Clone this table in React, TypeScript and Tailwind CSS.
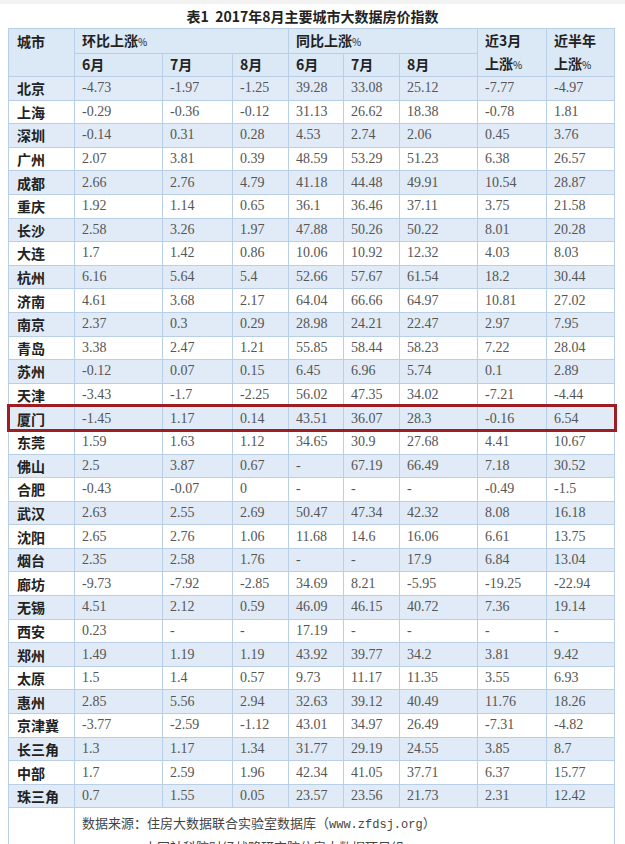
const rows: [string, ...string[]][] = [
  ["北京", "-4.73", "-1.97", "-1.25", "39.28", "33.08", "25.12", "-7.77", "-4.97"],
  ["上海", "-0.29", "-0.36", "-0.12", "31.13", "26.62", "18.38", "-0.78", "1.81"],
  ["深圳", "-0.14", "0.31", "0.28", "4.53", "2.74", "2.06", "0.45", "3.76"],
  ["广州", "2.07", "3.81", "0.39", "48.59", "53.29", "51.23", "6.38", "26.57"],
  ["成都", "2.66", "2.76", "4.79", "41.18", "44.48", "49.91", "10.54", "28.87"],
  ["重庆", "1.92", "1.14", "0.65", "36.1", "36.46", "37.11", "3.75", "21.58"],
  ["长沙", "2.58", "3.26", "1.97", "47.88", "50.26", "50.22", "8.01", "20.28"],
  ["大连", "1.7", "1.42", "0.86", "10.06", "10.92", "12.32", "4.03", "8.03"],
  ["杭州", "6.16", "5.64", "5.4", "52.66", "57.67", "61.54", "18.2", "30.44"],
  ["济南", "4.61", "3.68", "2.17", "64.04", "66.66", "64.97", "10.81", "27.02"],
  ["南京", "2.37", "0.3", "0.29", "28.98", "24.21", "22.47", "2.97", "7.95"],
  ["青岛", "3.38", "2.47", "1.21", "55.85", "58.44", "58.23", "7.22", "28.04"],
  ["苏州", "-0.12", "0.07", "0.15", "6.45", "6.96", "5.74", "0.1", "2.89"],
  ["天津", "-3.43", "-1.7", "-2.25", "56.02", "47.35", "34.02", "-7.21", "-4.44"],
  ["厦门", "-1.45", "1.17", "0.14", "43.51", "36.07", "28.3", "-0.16", "6.54"],
  ["东莞", "1.59", "1.63", "1.12", "34.65", "30.9", "27.68", "4.41", "10.67"],
  ["佛山", "2.5", "3.87", "0.67", "-", "67.19", "66.49", "7.18", "30.52"],
  ["合肥", "-0.43", "-0.07", "0", "-", "-", "-", "-0.49", "-1.5"],
  ["武汉", "2.63", "2.55", "2.69", "50.47", "47.34", "42.32", "8.08", "16.18"],
  ["沈阳", "2.65", "2.76", "1.06", "11.68", "14.6", "16.06", "6.61", "13.75"],
  ["烟台", "2.35", "2.58", "1.76", "-", "-", "17.9", "6.84", "13.04"],
  ["廊坊", "-9.73", "-7.92", "-2.85", "34.69", "8.21", "-5.95", "-19.25", "-22.94"],
  ["无锡", "4.51", "2.12", "0.59", "46.09", "46.15", "40.72", "7.36", "19.14"],
  ["西安", "0.23", "-", "-", "17.19", "-", "-", "-", "-"],
  ["郑州", "1.49", "1.19", "1.19", "43.92", "39.77", "34.2", "3.81", "9.42"],
  ["太原", "1.5", "1.4", "0.57", "9.73", "11.17", "11.35", "3.55", "6.93"],
  ["惠州", "2.85", "5.56", "2.94", "32.63", "39.12", "40.49", "11.76", "18.26"],
  ["京津冀", "-3.77", "-2.59", "-1.12", "43.01", "34.97", "26.49", "-7.31", "-4.82"],
  ["长三角", "1.3", "1.17", "1.34", "31.77", "29.19", "24.55", "3.85", "8.7"],
  ["中部", "1.7", "2.59", "1.96", "42.34", "41.05", "37.71", "6.37", "15.77"],
  ["珠三角", "0.7", "1.55", "0.05", "23.57", "23.56", "21.73", "2.31", "12.42"],
];

const cjk = "font-['Noto_Sans_CJK_SC',sans-serif]";
const serif = "font-['Liberation_Serif','Noto_Sans_CJK_SC',serif]";
const bd = "border border-[#b9cfe7]";

// small percent sign, as in the source image
const Pct = () => <span className="text-[10px] font-normal">%</span>;

export default function App() {
  return (
    <div className="w-[625px] h-[844px] overflow-hidden bg-white">
      <div className="h-[4px] bg-[#f3f3f3]" />
      <div className={`h-[24px] flex items-center justify-center text-[14px] font-bold text-[#222] ${cjk}`}>
        表1&nbsp;&nbsp;2017年8月主要城市大数据房价指数
      </div>
      <table className="ml-[8px] w-[606px] border-collapse table-fixed">
        <colgroup>
          <col className="w-[66px]" />
          <col className="w-[88px]" />
          <col className="w-[70px]" />
          <col className="w-[56px]" />
          <col className="w-[55px]" />
          <col className="w-[56px]" />
          <col className="w-[78px]" />
          <col className="w-[69px]" />
          <col className="w-[68px]" />
        </colgroup>
        <thead className={`bg-[#dbe8f5] text-[#222] font-bold text-[14px] ${cjk}`}>
          <tr className="h-[24px]">
            <th rowSpan={2} className={`${bd} align-top text-left pl-[8px] pt-[2px] font-bold`}>城市</th>
            <th colSpan={3} className={`${bd} text-left pl-[7px]`}>环比上涨<Pct /></th>
            <th colSpan={3} className={`${bd} text-left pl-[7px]`}>同比上涨<Pct /></th>
            <th rowSpan={2} className={`${bd} text-left pl-[7px] align-top leading-[23px]`}>
              近3月<br />上涨<Pct />
            </th>
            <th rowSpan={2} className={`${bd} text-left pl-[7px] align-top leading-[23px]`}>
              近半年<br />上涨<Pct />
            </th>
          </tr>
          <tr className="h-[23px]">
            {["6月", "7月", "8月", "6月", "7月", "8月"].map((m, i) => (
              <th key={i} className={`${bd} text-left pl-[7px]`}>{m}</th>
            ))}
          </tr>
        </thead>
        <tbody>
          {rows.map((r, i) => (
            <tr key={r[0]} className={`h-[23.6px] ${i % 2 === 0 ? "bg-[#e0ebf7]" : "bg-white"}`}>
              <td className={`${bd} relative pl-[8px] p-0 text-[14px] font-bold text-[#222] leading-none ${cjk}`}>
                {r[0]}
                {r[0] === "厦门" && (
                  <div className="absolute left-[-2px] top-[-3px] w-[610px] h-[28px] border-[3px] border-[#9e1d22] pointer-events-none" />
                )}
              </td>
              {r.slice(1).map((v, j) => (
                <td key={j} className={`${bd} pl-[7px] text-[14px] text-[#555] leading-none ${serif}`}>
                  {v}
                </td>
              ))}
            </tr>
          ))}
          <tr>
            <td className={bd} />
            <td colSpan={8} className={`${bd} pl-[7px] pt-[4px] text-[13px] text-[#444] leading-[21px] ${cjk}`}>
              <div>
                数据来源：住房大数据联合实验室数据库（
                <span className="font-['Liberation_Mono',monospace] text-[12px]">www.zfdsj.org</span>）
              </div>
              <div className="pl-[62px]">中国社科院财经战略研究院住房大数据项目组</div>
            </td>
          </tr>
        </tbody>
      </table>
    </div>
  );
}
